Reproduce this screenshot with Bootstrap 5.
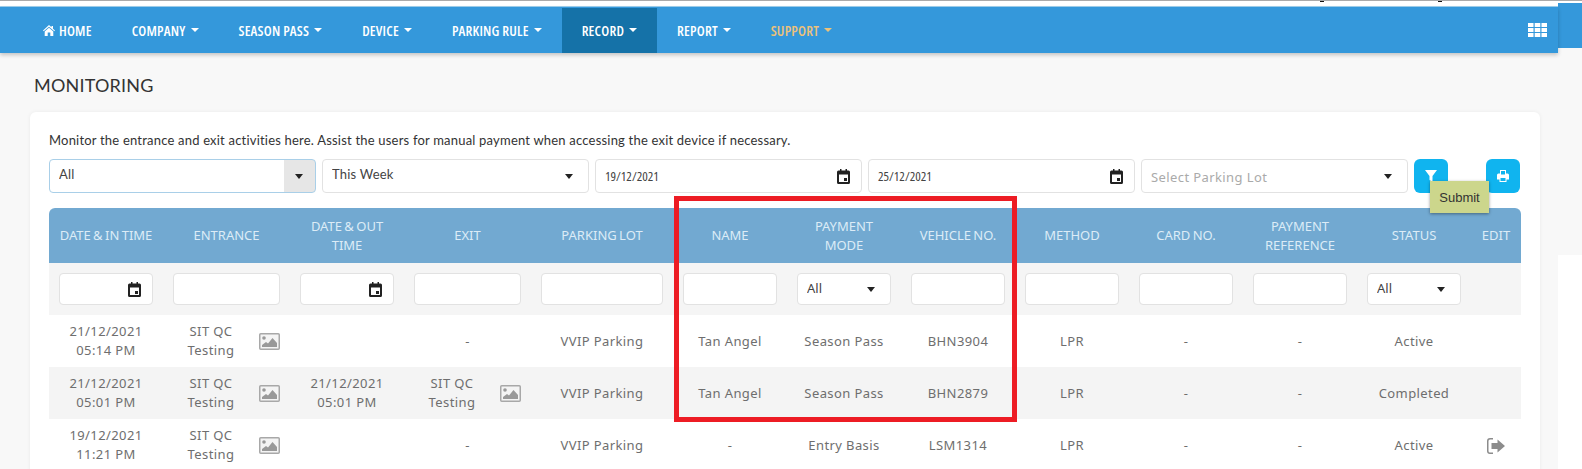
<!DOCTYPE html>
<html lang="en">
<head>
    <meta charset="UTF-8">
    <title>Monitoring</title>
    <link href="https://cdn.jsdelivr.net/npm/bootstrap@5.3.0/dist/css/bootstrap.min.css" rel="stylesheet">
    <style>
        body {
            background: #fff;
            overflow: hidden;
            font-family: "Noto Sans", sans-serif;
            font-size: 13px;
            color: #666;
        }
        .tight-face { font-family: "Open Sans", "Liberation Sans", sans-serif; font-stretch: 75%; }
        .mid-face { font-family: Lato, "Liberation Sans", sans-serif; letter-spacing: .2px; }
        .sheet { position: relative; width: 1582px; height: 469px; overflow: hidden; border-top: 1px solid #aaa; }
        .page-main { width: 1558px; flex: none; }
        .side-strip { flex: 1; }
        .side-blue { margin-top: 2px; height: 45px; background: #3498db; }
        .side-grey { height: 207px; background: #f8f8f8; }
        .top-gap { height: 6px; background: #fff; border-bottom: 1px solid #9fd0ee; }
        .main-bar { --bs-navbar-nav-link-padding-x: 20px; height: 46px; padding: 0 0 0 23px; background: #3498db; box-shadow: 0 2px 4px rgba(0, 0, 0, .22); position: relative; }
        .main-bar .nav-link {
            display: flex; align-items: center; height: 45px;
            color: #fff; font-size: 14px; font-weight: 600; letter-spacing: .2px;
        }
        .main-bar .nav-link.dropdown-toggle::after { margin-left: 5px; border-top-width: 4px; border-left-width: 4px; border-right-width: 4px; }
        .main-bar .current { background: #1572a8; }
        .main-bar .nav-link.gold { color: #edc27a; }
        .home-ico { width: 12px; height: 11px; margin-right: 4px; fill: #fff; }
        .grid-ico { width: 19px; height: 14px; margin-right: 11px; fill: #fff; }
        .page-body { background: #f8f8f8; height: 416px; padding: 0 18px 0 30px; }
        .page-title { margin: 0; padding: 21px 0 15px 4px; color: #333; font-size: 18px; font-weight: 400; line-height: 23px; }
        .mon-card { border: 0; border-radius: 6px; padding: 19px 20px 0 19px; height: 400px; box-shadow: 0 0 4px rgba(0, 0, 0, .06); }
        .mon-intro { margin: 0 0 10px; color: #333; font-size: 13px; line-height: 18px; }
        .filter-bar { gap: 6px; height: 34px; margin-bottom: 15px; }
        .filter-bar .form-control, .filter-bar .form-select { flex: 1 1 0; min-width: 0; height: 34px; }
        .mon-card .form-control, .mon-card .form-select {
            border-color: #e2e2e2; border-radius: 4px; padding: 0 9px; font-size: 13px; color: #444; box-shadow: none;
        }
        .mon-card .filter-bar .mid-face { padding-bottom: 3px; }
        .mon-card .form-select {
            background-image: url("data:image/svg+xml,%3Csvg xmlns='http://www.w3.org/2000/svg' viewBox='0 0 8 5'%3E%3Cpath d='M0 0h8L4 5z' fill='%23222'/%3E%3C/svg%3E");
            background-size: 8px 5px; background-position: right 15px center;
        }
        .mon-card .filter-bar .select-open {
            border-color: #a9cfe8;
            background-image: url("data:image/svg+xml,%3Csvg xmlns='http://www.w3.org/2000/svg' viewBox='0 0 8 5'%3E%3Cpath d='M0 0h8L4 5z' fill='%23222'/%3E%3C/svg%3E"), linear-gradient(#e6e6e6, #e6e6e6);
            background-size: 8px 5px, 31px 32px; background-position: right 12px center, right 0 center;
        }
        .mon-card .date-field {
            background-image: url("data:image/svg+xml,%3Csvg xmlns='http://www.w3.org/2000/svg' viewBox='0 0 13 15'%3E%3Cpath fill-rule='evenodd' d='M3 0h1.500v1.500h4V0H10v1.500h1.500A1.500 1.500 0 0 1 13 3v10.500a1.500 1.500 0 0 1-1.500 1.500h-10A1.500 1.500 0 0 1 0 13.500V3a1.500 1.500 0 0 1 1.500-1.500H3zM2 5.500v7.500h9V5.500zM7 9h3v3H7z' fill='%23222'/%3E%3C/svg%3E");
            background-repeat: no-repeat; background-size: 13px 15px; background-position: right 11px center;
        }
        .mon-card .parking-select { color: #aaa; letter-spacing: .4px; padding-top: 3px; }
        .btn-cyan { flex: none; display: flex; align-items: center; justify-content: center; width: 34px; height: 34px; padding: 0; border: 0; border-radius: 6px; background: #10b4ef; }
        .btn-cyan svg { width: 12px; height: 12px; fill: #fff; }
        .btn-print { margin-left: 32px; }
        .tip-wrap { position: relative; flex: none; }
        .tip-box {
            position: absolute; left: 16px; top: 22px; width: 59px; height: 32px; z-index: 5;
            display: flex; align-items: center; justify-content: center;
            background: #ccd68c; color: #333; font: 13px "Liberation Sans", sans-serif;
            box-shadow: 0 1px 3px rgba(0, 0, 0, .4);
        }
        .mon-table { table-layout: fixed; width: 1471px; margin: 0; --bs-table-bg: transparent; --bs-table-color: #6e6e6e; }
        .mon-table th, .mon-table td { border: 0; padding: 0 10px; text-align: center; vertical-align: middle; line-height: 19px; font-size: 13px; letter-spacing: .4px; }
        .mon-table thead tr.head-row th { height: 55px; background: #72a9d1; color: #dcecf7; font-weight: 400; padding: 0 8px; letter-spacing: 0; word-spacing: -1px; }
        .mon-table thead tr.head-row th:first-child { border-top-left-radius: 6px; }
        .mon-table thead tr.head-row th:last-child { border-top-right-radius: 6px; }
        .mon-table thead tr.search-row td { height: 52px; background: #f5f5f5; }
        .mon-table tbody td { height: 52px; }
        .mon-table tbody tr:nth-child(even) td { background: #f4f4f4; }
        .mon-table .form-control, .mon-table .form-select { height: 32px; }
        .w-a { width: 114px; } .w-b { width: 127px; } .w-c { width: 114px; } .w-d { width: 127px; }
        .w-e { width: 142px; } .w-f { width: 114px; } .w-g { width: 50px; }
        .place-cell { display: flex; align-items: center; gap: 10px; }
        .place-cell span { flex: 1; }
        .pic-ico { flex: none; width: 21px; height: 17px; }
        .out-ico { width: 18px; height: 16px; fill: #8c8c8c; }
        .red-frame { position: absolute; left: 674px; top: 195px; width: 343px; height: 226px; border: 5px solid #ed1c24; z-index: 4; pointer-events: none; }
        .clip-speck { position: absolute; top: 0; height: 1px; width: 4px; background: #111; }
    </style>
</head>
<body>
<div class="sheet d-flex">
    <i class="clip-speck" style="left: 1320px"></i>
    <i class="clip-speck" style="left: 1438px"></i>
    <div class="page-main">
        <div class="top-gap"></div>
        <nav class="navbar navbar-expand main-bar">
            <ul class="navbar-nav me-auto tight-face">
                <li class="nav-item"><a class="nav-link" href="#"><svg class="home-ico" viewBox="0 0 12 11"><path d="M6 0 0 5.500l.7.800L6 1.700l5.300 4.600.7-.8-2-1.800V1H8.500v1.200zM1.700 6.500V11h3V7.500h2.600V11h3V6.500L6 2.800z"/></svg>HOME</a></li>
                <li class="nav-item"><a class="nav-link dropdown-toggle" href="#">COMPANY</a></li>
                <li class="nav-item"><a class="nav-link dropdown-toggle" href="#">SEASON PASS</a></li>
                <li class="nav-item"><a class="nav-link dropdown-toggle" href="#">DEVICE</a></li>
                <li class="nav-item"><a class="nav-link dropdown-toggle" href="#">PARKING RULE</a></li>
                <li class="nav-item current"><a class="nav-link dropdown-toggle" href="#">RECORD</a></li>
                <li class="nav-item"><a class="nav-link dropdown-toggle" href="#">REPORT</a></li>
                <li class="nav-item"><a class="nav-link dropdown-toggle gold" href="#">SUPPORT</a></li>
            </ul>
            <svg class="grid-ico" viewBox="0 0 19 14"><path d="M0 0h5.500v4H0zM6.700 0h5.600v4H6.700zM13.500 0H19v4h-5.500zM0 5h5.500v4H0zM6.700 5h5.600v4H6.700zM13.500 5H19v4h-5.500zM0 10h5.500v4H0zM6.700 10h5.600v4H6.700zM13.500 10H19v4h-5.500z"/></svg>
        </nav>
        <div class="page-body">
            <h1 class="page-title mid-face">MONITORING</h1>
            <div class="card mon-card">
                <p class="mon-intro mid-face">Monitor the entrance and exit activities here. Assist the users for manual payment when accessing the exit device if necessary.</p>
                <div class="d-flex filter-bar">
                    <select class="form-select select-open mid-face"><option>All</option></select>
                    <select class="form-select mid-face"><option>This Week</option></select>
                    <input class="form-control date-field tight-face" type="text" value="19/12/2021">
                    <input class="form-control date-field tight-face" type="text" value="25/12/2021">
                    <select class="form-select parking-select"><option>Select Parking Lot</option></select>
                    <div class="tip-wrap">
                        <button class="btn btn-cyan" type="button"><svg viewBox="0 0 12 12"><path d="M0 0h12L7.500 6v6l-3-2V6z"/></svg></button>
                        <div class="tip-box">Submit</div>
                    </div>
                    <button class="btn btn-cyan btn-print" type="button"><svg viewBox="0 0 12 12"><path fill-rule="evenodd" d="M3 0h6v3.500h1.500A1.500 1.500 0 0 1 12 5v4.500H9.500V12h-7V9.500H0V5a1.500 1.500 0 0 1 1.500-1.500H3zM4 1v3.500h4V1zM3.500 8v3h5V8z"/></svg></button>
                </div>
                <table class="table mon-table">
                    <thead>
                        <tr class="head-row">
                            <th class="w-a">DATE &amp; IN TIME</th><th class="w-b">ENTRANCE</th><th class="w-c">DATE &amp; OUT TIME</th><th class="w-d">EXIT</th><th class="w-e">PARKING LOT</th><th class="w-f">NAME</th><th class="w-f">PAYMENT MODE</th><th class="w-f">VEHICLE NO.</th><th class="w-f">METHOD</th><th class="w-f">CARD NO.</th><th class="w-f">PAYMENT REFERENCE</th><th class="w-f">STATUS</th><th class="w-g">EDIT</th>
                        </tr>
                        <tr class="search-row">
                            <td><input class="form-control date-field" type="text"></td>
                            <td><input class="form-control" type="text"></td>
                            <td><input class="form-control date-field" type="text"></td>
                            <td><input class="form-control" type="text"></td>
                            <td><input class="form-control" type="text"></td>
                            <td><input class="form-control" type="text"></td>
                            <td><select class="form-select"><option>All</option></select></td>
                            <td><input class="form-control" type="text"></td>
                            <td><input class="form-control" type="text"></td>
                            <td><input class="form-control" type="text"></td>
                            <td><input class="form-control" type="text"></td>
                            <td><select class="form-select"><option>All</option></select></td>
                            <td></td>
                        </tr>
                    </thead>
                    <tbody>
                        <tr>
                            <td>21/12/2021<br>05:14 PM</td>
                            <td><div class="place-cell"><span>SIT QC<br>Testing</span><svg class="pic-ico" viewBox="0 0 21 17"><use href="#pic"/></svg></div></td>
                            <td></td>
                            <td>-</td>
                            <td>VVIP Parking</td>
                            <td>Tan Angel</td>
                            <td>Season Pass</td>
                            <td>BHN3904</td>
                            <td>LPR</td>
                            <td>-</td>
                            <td>-</td>
                            <td>Active</td>
                            <td></td>
                        </tr>
                        <tr>
                            <td>21/12/2021<br>05:01 PM</td>
                            <td><div class="place-cell"><span>SIT QC<br>Testing</span><svg class="pic-ico" viewBox="0 0 21 17"><use href="#pic"/></svg></div></td>
                            <td>21/12/2021<br>05:01 PM</td>
                            <td><div class="place-cell"><span>SIT QC<br>Testing</span><svg class="pic-ico" viewBox="0 0 21 17"><use href="#pic"/></svg></div></td>
                            <td>VVIP Parking</td>
                            <td>Tan Angel</td>
                            <td>Season Pass</td>
                            <td>BHN2879</td>
                            <td>LPR</td>
                            <td>-</td>
                            <td>-</td>
                            <td>Completed</td>
                            <td></td>
                        </tr>
                        <tr>
                            <td>19/12/2021<br>11:21 PM</td>
                            <td><div class="place-cell"><span>SIT QC<br>Testing</span><svg class="pic-ico" viewBox="0 0 21 17"><use href="#pic"/></svg></div></td>
                            <td></td>
                            <td>-</td>
                            <td>VVIP Parking</td>
                            <td>-</td>
                            <td>Entry Basis</td>
                            <td>LSM1314</td>
                            <td>LPR</td>
                            <td>-</td>
                            <td>-</td>
                            <td>Active</td>
                            <td><svg class="out-ico" viewBox="0 0 18 16"><path d="M6 1.500V0H3a3 3 0 0 0-3 3v10a3 3 0 0 0 3 3h3v-1.500H3A1.500 1.500 0 0 1 1.500 13V3A1.500 1.500 0 0 1 3 1.500zM10.500 1.500 18 8l-7.500 6.500V11H4.500V5h6z"/></svg></td>
                        </tr>
                    </tbody>
                </table>
            </div>
        </div>
    </div>
    <div class="side-strip">
        <div class="side-blue"></div>
        <div class="side-grey"></div>
    </div>
    <div class="red-frame"></div>
    <svg width="0" height="0" class="position-absolute"><defs><g id="pic"><rect x=".75" y=".75" width="19.500" height="15.500" rx="1" fill="#f4f4f4" stroke="#a8a8a8" stroke-width="1.500"/><circle cx="5" cy="5" r="1.800" fill="#999"/><path d="M3 14v-2l4-3 2 1.500L13.500 5 18 10v4z" fill="#999"/></g></defs></svg>
</div>
<script src="https://cdn.jsdelivr.net/npm/bootstrap@5.3.0/dist/js/bootstrap.bundle.min.js"></script>
</body>
</html>
